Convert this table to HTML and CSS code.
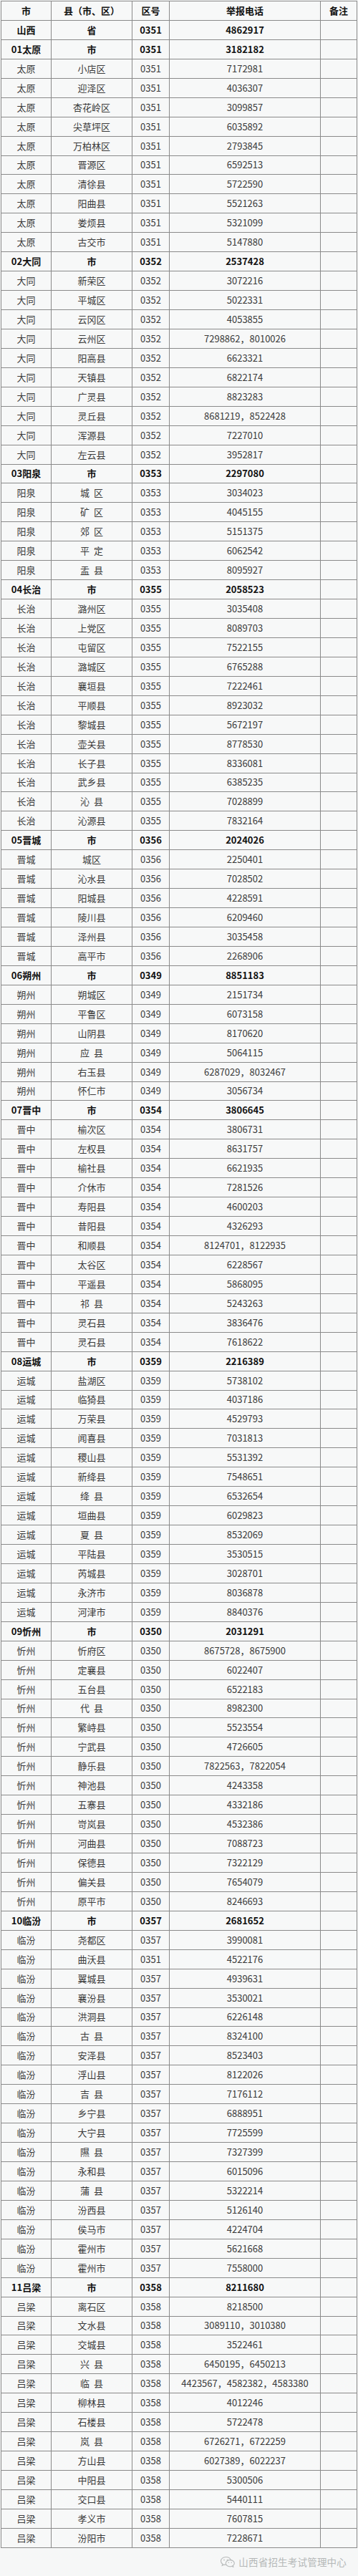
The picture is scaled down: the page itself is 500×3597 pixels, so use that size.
FILE: index.html
```html
<!DOCTYPE html>
<html lang="zh-CN">
<head>
<meta charset="utf-8">
<title>山西省举报电话</title>
<link rel="stylesheet" href="styles.css">
</head>
<body>
<div class="page">
<table class="t">
<colgroup><col class="c1"><col class="c2"><col class="c3"><col class="c4"><col class="c5"></colgroup>
<tbody>
<tr class="b"><td>市</td><td>县（市、区）</td><td>区号</td><td>举报电话</td><td>备注</td></tr>
<tr class="b"><td>山西</td><td>省</td><td>0351</td><td>4862917</td><td></td></tr>
<tr class="b"><td>01太原</td><td>市</td><td>0351</td><td>3182182</td><td></td></tr>
<tr><td>太原</td><td>小店区</td><td>0351</td><td>7172981</td><td></td></tr>
<tr><td>太原</td><td>迎泽区</td><td>0351</td><td>4036307</td><td></td></tr>
<tr><td>太原</td><td>杏花岭区</td><td>0351</td><td>3099857</td><td></td></tr>
<tr><td>太原</td><td>尖草坪区</td><td>0351</td><td>6035892</td><td></td></tr>
<tr><td>太原</td><td>万柏林区</td><td>0351</td><td>2793845</td><td></td></tr>
<tr><td>太原</td><td>晋源区</td><td>0351</td><td>6592513</td><td></td></tr>
<tr><td>太原</td><td>清徐县</td><td>0351</td><td>5722590</td><td></td></tr>
<tr><td>太原</td><td>阳曲县</td><td>0351</td><td>5521263</td><td></td></tr>
<tr><td>太原</td><td>娄烦县</td><td>0351</td><td>5321099</td><td></td></tr>
<tr><td>太原</td><td>古交市</td><td>0351</td><td>5147880</td><td></td></tr>
<tr class="b"><td>02大同</td><td>市</td><td>0352</td><td>2537428</td><td></td></tr>
<tr><td>大同</td><td>新荣区</td><td>0352</td><td>3072216</td><td></td></tr>
<tr><td>大同</td><td>平城区</td><td>0352</td><td>5022331</td><td></td></tr>
<tr><td>大同</td><td>云冈区</td><td>0352</td><td>4053855</td><td></td></tr>
<tr><td>大同</td><td>云州区</td><td>0352</td><td>7298862，8010026</td><td></td></tr>
<tr><td>大同</td><td>阳高县</td><td>0352</td><td>6623321</td><td></td></tr>
<tr><td>大同</td><td>天镇县</td><td>0352</td><td>6822174</td><td></td></tr>
<tr><td>大同</td><td>广灵县</td><td>0352</td><td>8823283</td><td></td></tr>
<tr><td>大同</td><td>灵丘县</td><td>0352</td><td>8681219，8522428</td><td></td></tr>
<tr><td>大同</td><td>浑源县</td><td>0352</td><td>7227010</td><td></td></tr>
<tr><td>大同</td><td>左云县</td><td>0352</td><td>3952817</td><td></td></tr>
<tr class="b"><td>03阳泉</td><td>市</td><td>0353</td><td>2297080</td><td></td></tr>
<tr><td>阳泉</td><td>城&nbsp;&nbsp;区</td><td>0353</td><td>3034023</td><td></td></tr>
<tr><td>阳泉</td><td>矿&nbsp;&nbsp;区</td><td>0353</td><td>4045155</td><td></td></tr>
<tr><td>阳泉</td><td>郊&nbsp;&nbsp;区</td><td>0353</td><td>5151375</td><td></td></tr>
<tr><td>阳泉</td><td>平&nbsp;&nbsp;定</td><td>0353</td><td>6062542</td><td></td></tr>
<tr><td>阳泉</td><td>盂&nbsp;&nbsp;县</td><td>0353</td><td>8095927</td><td></td></tr>
<tr class="b"><td>04长治</td><td>市</td><td>0355</td><td>2058523</td><td></td></tr>
<tr><td>长治</td><td>潞州区</td><td>0355</td><td>3035408</td><td></td></tr>
<tr><td>长治</td><td>上党区</td><td>0355</td><td>8089703</td><td></td></tr>
<tr><td>长治</td><td>屯留区</td><td>0355</td><td>7522155</td><td></td></tr>
<tr><td>长治</td><td>潞城区</td><td>0355</td><td>6765288</td><td></td></tr>
<tr><td>长治</td><td>襄垣县</td><td>0355</td><td>7222461</td><td></td></tr>
<tr><td>长治</td><td>平顺县</td><td>0355</td><td>8923032</td><td></td></tr>
<tr><td>长治</td><td>黎城县</td><td>0355</td><td>5672197</td><td></td></tr>
<tr><td>长治</td><td>壶关县</td><td>0355</td><td>8778530</td><td></td></tr>
<tr><td>长治</td><td>长子县</td><td>0355</td><td>8336081</td><td></td></tr>
<tr><td>长治</td><td>武乡县</td><td>0355</td><td>6385235</td><td></td></tr>
<tr><td>长治</td><td>沁&nbsp;&nbsp;县</td><td>0355</td><td>7028899</td><td></td></tr>
<tr><td>长治</td><td>沁源县</td><td>0355</td><td>7832164</td><td></td></tr>
<tr class="b"><td>05晋城</td><td>市</td><td>0356</td><td>2024026</td><td></td></tr>
<tr><td>晋城</td><td>城区</td><td>0356</td><td>2250401</td><td></td></tr>
<tr><td>晋城</td><td>沁水县</td><td>0356</td><td>7028502</td><td></td></tr>
<tr><td>晋城</td><td>阳城县</td><td>0356</td><td>4228591</td><td></td></tr>
<tr><td>晋城</td><td>陵川县</td><td>0356</td><td>6209460</td><td></td></tr>
<tr><td>晋城</td><td>泽州县</td><td>0356</td><td>3035458</td><td></td></tr>
<tr><td>晋城</td><td>高平市</td><td>0356</td><td>2268906</td><td></td></tr>
<tr class="b"><td>06朔州</td><td>市</td><td>0349</td><td>8851183</td><td></td></tr>
<tr><td>朔州</td><td>朔城区</td><td>0349</td><td>2151734</td><td></td></tr>
<tr><td>朔州</td><td>平鲁区</td><td>0349</td><td>6073158</td><td></td></tr>
<tr><td>朔州</td><td>山阴县</td><td>0349</td><td>8170620</td><td></td></tr>
<tr><td>朔州</td><td>应&nbsp;&nbsp;县</td><td>0349</td><td>5064115</td><td></td></tr>
<tr><td>朔州</td><td>右玉县</td><td>0349</td><td>6287029，8032467</td><td></td></tr>
<tr><td>朔州</td><td>怀仁市</td><td>0349</td><td>3056734</td><td></td></tr>
<tr class="b"><td>07晋中</td><td>市</td><td>0354</td><td>3806645</td><td></td></tr>
<tr><td>晋中</td><td>榆次区</td><td>0354</td><td>3806731</td><td></td></tr>
<tr><td>晋中</td><td>左权县</td><td>0354</td><td>8631757</td><td></td></tr>
<tr><td>晋中</td><td>榆社县</td><td>0354</td><td>6621935</td><td></td></tr>
<tr><td>晋中</td><td>介休市</td><td>0354</td><td>7281526</td><td></td></tr>
<tr><td>晋中</td><td>寿阳县</td><td>0354</td><td>4600203</td><td></td></tr>
<tr><td>晋中</td><td>昔阳县</td><td>0354</td><td>4326293</td><td></td></tr>
<tr><td>晋中</td><td>和顺县</td><td>0354</td><td>8124701，8122935</td><td></td></tr>
<tr><td>晋中</td><td>太谷区</td><td>0354</td><td>6228567</td><td></td></tr>
<tr><td>晋中</td><td>平遥县</td><td>0354</td><td>5868095</td><td></td></tr>
<tr><td>晋中</td><td>祁&nbsp;&nbsp;县</td><td>0354</td><td>5243263</td><td></td></tr>
<tr><td>晋中</td><td>灵石县</td><td>0354</td><td>3836476</td><td></td></tr>
<tr><td>晋中</td><td>灵石县</td><td>0354</td><td>7618622</td><td></td></tr>
<tr class="b"><td>08运城</td><td>市</td><td>0359</td><td>2216389</td><td></td></tr>
<tr><td>运城</td><td>盐湖区</td><td>0359</td><td>5738102</td><td></td></tr>
<tr><td>运城</td><td>临猗县</td><td>0359</td><td>4037186</td><td></td></tr>
<tr><td>运城</td><td>万荣县</td><td>0359</td><td>4529793</td><td></td></tr>
<tr><td>运城</td><td>闻喜县</td><td>0359</td><td>7031813</td><td></td></tr>
<tr><td>运城</td><td>稷山县</td><td>0359</td><td>5531392</td><td></td></tr>
<tr><td>运城</td><td>新绛县</td><td>0359</td><td>7548651</td><td></td></tr>
<tr><td>运城</td><td>绛&nbsp;&nbsp;县</td><td>0359</td><td>6532654</td><td></td></tr>
<tr><td>运城</td><td>垣曲县</td><td>0359</td><td>6029823</td><td></td></tr>
<tr><td>运城</td><td>夏&nbsp;&nbsp;县</td><td>0359</td><td>8532069</td><td></td></tr>
<tr><td>运城</td><td>平陆县</td><td>0359</td><td>3530515</td><td></td></tr>
<tr><td>运城</td><td>芮城县</td><td>0359</td><td>3028701</td><td></td></tr>
<tr><td>运城</td><td>永济市</td><td>0359</td><td>8036878</td><td></td></tr>
<tr><td>运城</td><td>河津市</td><td>0359</td><td>8840376</td><td></td></tr>
<tr class="b"><td>09忻州</td><td>市</td><td>0350</td><td>2031291</td><td></td></tr>
<tr><td>忻州</td><td>忻府区</td><td>0350</td><td>8675728，8675900</td><td></td></tr>
<tr><td>忻州</td><td>定襄县</td><td>0350</td><td>6022407</td><td></td></tr>
<tr><td>忻州</td><td>五台县</td><td>0350</td><td>6522183</td><td></td></tr>
<tr><td>忻州</td><td>代&nbsp;&nbsp;县</td><td>0350</td><td>8982300</td><td></td></tr>
<tr><td>忻州</td><td>繁峙县</td><td>0350</td><td>5523554</td><td></td></tr>
<tr><td>忻州</td><td>宁武县</td><td>0350</td><td>4726605</td><td></td></tr>
<tr><td>忻州</td><td>静乐县</td><td>0350</td><td>7822563，7822054</td><td></td></tr>
<tr><td>忻州</td><td>神池县</td><td>0350</td><td>4243358</td><td></td></tr>
<tr><td>忻州</td><td>五寨县</td><td>0350</td><td>4332186</td><td></td></tr>
<tr><td>忻州</td><td>岢岚县</td><td>0350</td><td>4532386</td><td></td></tr>
<tr><td>忻州</td><td>河曲县</td><td>0350</td><td>7088723</td><td></td></tr>
<tr><td>忻州</td><td>保德县</td><td>0350</td><td>7322129</td><td></td></tr>
<tr><td>忻州</td><td>偏关县</td><td>0350</td><td>7654079</td><td></td></tr>
<tr><td>忻州</td><td>原平市</td><td>0350</td><td>8246693</td><td></td></tr>
<tr class="b"><td>10临汾</td><td>市</td><td>0357</td><td>2681652</td><td></td></tr>
<tr><td>临汾</td><td>尧都区</td><td>0357</td><td>3990081</td><td></td></tr>
<tr><td>临汾</td><td>曲沃县</td><td>0351</td><td>4522176</td><td></td></tr>
<tr><td>临汾</td><td>翼城县</td><td>0357</td><td>4939631</td><td></td></tr>
<tr><td>临汾</td><td>襄汾县</td><td>0357</td><td>3530021</td><td></td></tr>
<tr><td>临汾</td><td>洪洞县</td><td>0357</td><td>6226148</td><td></td></tr>
<tr><td>临汾</td><td>古&nbsp;&nbsp;县</td><td>0357</td><td>8324100</td><td></td></tr>
<tr><td>临汾</td><td>安泽县</td><td>0357</td><td>8523403</td><td></td></tr>
<tr><td>临汾</td><td>浮山县</td><td>0357</td><td>8122026</td><td></td></tr>
<tr><td>临汾</td><td>吉&nbsp;&nbsp;县</td><td>0357</td><td>7176112</td><td></td></tr>
<tr><td>临汾</td><td>乡宁县</td><td>0357</td><td>6888951</td><td></td></tr>
<tr><td>临汾</td><td>大宁县</td><td>0357</td><td>7725599</td><td></td></tr>
<tr><td>临汾</td><td>隰&nbsp;&nbsp;县</td><td>0357</td><td>7327399</td><td></td></tr>
<tr><td>临汾</td><td>永和县</td><td>0357</td><td>6015096</td><td></td></tr>
<tr><td>临汾</td><td>蒲&nbsp;&nbsp;县</td><td>0357</td><td>5322214</td><td></td></tr>
<tr><td>临汾</td><td>汾西县</td><td>0357</td><td>5126140</td><td></td></tr>
<tr><td>临汾</td><td>侯马市</td><td>0357</td><td>4224704</td><td></td></tr>
<tr><td>临汾</td><td>霍州市</td><td>0357</td><td>5621668</td><td></td></tr>
<tr><td>临汾</td><td>霍州市</td><td>0357</td><td>7558000</td><td></td></tr>
<tr class="b"><td>11吕梁</td><td>市</td><td>0358</td><td>8211680</td><td></td></tr>
<tr><td>吕梁</td><td>离石区</td><td>0358</td><td>8218500</td><td></td></tr>
<tr><td>吕梁</td><td>文水县</td><td>0358</td><td>3089110，3010380</td><td></td></tr>
<tr><td>吕梁</td><td>交城县</td><td>0358</td><td>3522461</td><td></td></tr>
<tr><td>吕梁</td><td>兴&nbsp;&nbsp;县</td><td>0358</td><td>6450195，6450213</td><td></td></tr>
<tr><td>吕梁</td><td>临&nbsp;&nbsp;县</td><td>0358</td><td>4423567，4582382，4583380</td><td></td></tr>
<tr><td>吕梁</td><td>柳林县</td><td>0358</td><td>4012246</td><td></td></tr>
<tr><td>吕梁</td><td>石楼县</td><td>0358</td><td>5722478</td><td></td></tr>
<tr><td>吕梁</td><td>岚&nbsp;&nbsp;县</td><td>0358</td><td>6726271，6722259</td><td></td></tr>
<tr><td>吕梁</td><td>方山县</td><td>0358</td><td>6027389，6022237</td><td></td></tr>
<tr><td>吕梁</td><td>中阳县</td><td>0358</td><td>5300506</td><td></td></tr>
<tr><td>吕梁</td><td>交口县</td><td>0358</td><td>5440111</td><td></td></tr>
<tr><td>吕梁</td><td>孝义市</td><td>0358</td><td>7607815</td><td></td></tr>
<tr><td>吕梁</td><td>汾阳市</td><td>0358</td><td>7228671</td><td></td></tr>
</tbody>
</table>
<div class="mark">
<svg class="wx" width="22" height="16" viewBox="0 0 22 16" aria-hidden="true">
<path d="M8.5 1.5C4.6 1.5 1.5 4 1.5 7.1c0 1.7 0.9 3.2 2.4 4.2l-0.6 2 2.3-1.2c0.9 0.3 1.9 0.4 2.9 0.4" fill="none" stroke="#b9bcbc" stroke-width="1.2" stroke-linecap="round"/>
<path d="M15.6 6.2C14.8 3.5 12 1.5 8.5 1.5" fill="none" stroke="#b9bcbc" stroke-width="1.2" stroke-linecap="round"/>
<ellipse cx="14.3" cy="10.3" rx="6" ry="4.6" fill="none" stroke="#b9bcbc" stroke-width="1.2"/>
<path d="M18.2 13.8l0.9 1.6-2.3-0.9" fill="none" stroke="#b9bcbc" stroke-width="1.1" stroke-linejoin="round"/>
<circle cx="6" cy="5.6" r="0.9" fill="#b9bcbc"/>
<circle cx="10.6" cy="5.6" r="0.9" fill="#b9bcbc"/>
<circle cx="12.3" cy="9.3" r="0.8" fill="#b9bcbc"/>
<circle cx="16.3" cy="9.3" r="0.8" fill="#b9bcbc"/>
</svg>
<span class="mark-text">山西省招生考试管理中心</span>
</div>
</div>
</body>
</html>
```

FILE: styles.css
```css
html, body {
  margin: 0;
  padding: 0;
  background: #f6f7f7;
}

.page {
  width: 500px;
  padding: 1px 0 0 1px;
  box-sizing: border-box;
  font-family: "Noto Sans CJK SC", "Noto Sans", sans-serif;
}

.t {
  width: 497px;
  border-collapse: collapse;
  table-layout: fixed;
  background: #f7f8f8;
  font-size: 13px;
  color: #3a3a3a;
}

.c1 { width: 70px; }
.c2 { width: 113px; }
.c3 { width: 52px; }
.c4 { width: 211px; }
.c5 { width: 51px; }

.t tr {
  height: 26.95px;
}

.t td {
  border: 1px solid #8a8a8a;
  text-align: center;
  vertical-align: middle;
  padding: 0;
  line-height: 16px;
  white-space: nowrap;
}

.t tr.b td {
  font-weight: 700;
  color: #111;
}

.mark {
  display: flex;
  justify-content: flex-end;
  align-items: center;
  gap: 4px;
  padding: 10px 16px 0 0;
  height: 28px;
  box-sizing: border-box;
}

.wx {
  display: block;
}

.mark-text {
  font-size: 13.5px;
  color: #b4b7b7;
  letter-spacing: 0.2px;
}
```
